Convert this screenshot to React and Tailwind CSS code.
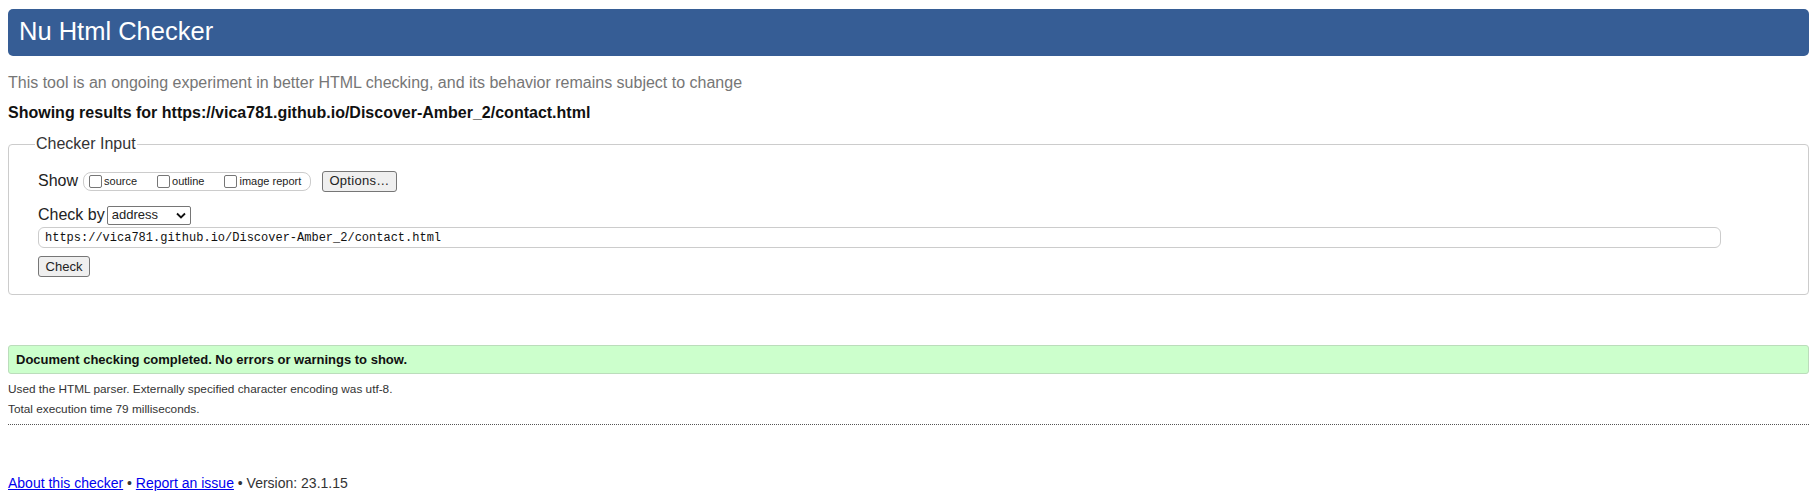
import React from 'react';

function Box({ label }) {
  return (
    <span className="flex items-center">
      <span className="w-[13px] h-[13px] border border-[#767676] rounded-[2px] bg-white mr-[2px]" />
      <span className="text-[11px] text-[#222]">{label}</span>
    </span>
  );
}

export default function App() {
  return (
    <div className="w-[1817px] h-[498px] bg-white text-[#222] font-['Liberation_Sans',Arial,sans-serif] pt-[9px]">
      {/* Title bar */}
      <div className="mx-2 h-[47px] rounded-[5px] bg-[#365d95] flex items-center px-[11px]">
        <h1 className="text-[25.5px] text-white leading-none pb-[1px]">Nu Html Checker</h1>
      </div>

      <p className="mx-2 mt-[17px] text-[16px] leading-[20px] text-[#767676]">
        This tool is an ongoing experiment in better HTML checking, and its behavior remains subject to change
      </p>
      <p className="mx-2 mt-[10px] text-[16px] leading-[20px] font-bold text-[#111]">
        Showing results for https://vica781.github.io/Discover-Amber_2/contact.html
      </p>

      {/* Checker input */}
      <fieldset className="mx-2 mt-[11px] h-[161px] border border-[#cccccc] rounded-[4px] px-[29px] pt-[16px]">
        <legend className="ml-[-3px] px-[1px] text-[16px] leading-[20px] text-[#333]">Checker Input</legend>

        <div className="flex items-center h-[22px]">
          <span className="text-[16px] mr-[5px]">Show</span>
          <span className="flex items-center gap-[20px] h-[19px] border border-[#cccccc] rounded-[8px] pl-[5px] pr-[4px] w-[228px]">
            <Box label="source" />
            <Box label="outline" />
            <Box label="image report" />
          </span>
          <span className="ml-[11px] h-[21px] w-[75px] border border-[#767676] rounded-[3px] bg-[#efefef] flex items-center justify-center text-[13px] tracking-[0.3px]">
            Options…
          </span>
        </div>

        <div className="flex items-center h-[20px] mt-[13px]">
          <span className="text-[16px] mr-[2px]">Check by</span>
          <span className="h-[19px] w-[84px] border border-[#767676] rounded-[2px] bg-white flex items-center justify-between pl-[4px] pr-[4px] text-[13px]">
            address
            <svg width="10" height="7" viewBox="0 0 10 7">
              <path d="M1 1.5 L5 5.5 L9 1.5" fill="none" stroke="#111" strokeWidth="1.8" />
            </svg>
          </span>
        </div>

        <div className="mt-[2px] h-[21px] w-[1683px] border border-[#cccccc] rounded-[6px] flex items-center pl-[6px] font-['Liberation_Mono',monospace] text-[12px] text-[#111]">
          https://vica781.github.io/Discover-Amber_2/contact.html
        </div>

        <span className="mt-[8px] h-[21px] w-[52px] border border-[#767676] rounded-[3px] bg-[#efefef] flex items-center justify-center text-[13px]">
          Check
        </span>
      </fieldset>

      {/* Result */}
      <div className="mx-2 mt-[50px] h-[29px] border border-[#bbddbb] rounded-[3px] bg-[#ccffcc] flex items-center px-[7px]">
        <span className="text-[13px] font-bold text-[#111]">Document checking completed. No errors or warnings to show.</span>
      </div>
      <p className="mx-2 mt-[7px] text-[11.8px] leading-[16px] text-[#333]">
        Used the HTML parser. Externally specified character encoding was utf-8.
      </p>
      <p className="mx-2 mt-[4px] text-[11.8px] leading-[16px] text-[#333]">Total execution time 79 milliseconds.</p>
      <div className="mx-2 mt-[7px] border-t border-dotted border-[#555]" />

      <p className="mx-2 mt-[48px] text-[14px] leading-[20px] text-[#333]">
        <a href="#" className="text-[#0000ee] underline">About this checker</a>
        {' • '}
        <a href="#" className="text-[#0000ee] underline">Report an issue</a>
        {' • Version: 23.1.15'}
      </p>
    </div>
  );
}
